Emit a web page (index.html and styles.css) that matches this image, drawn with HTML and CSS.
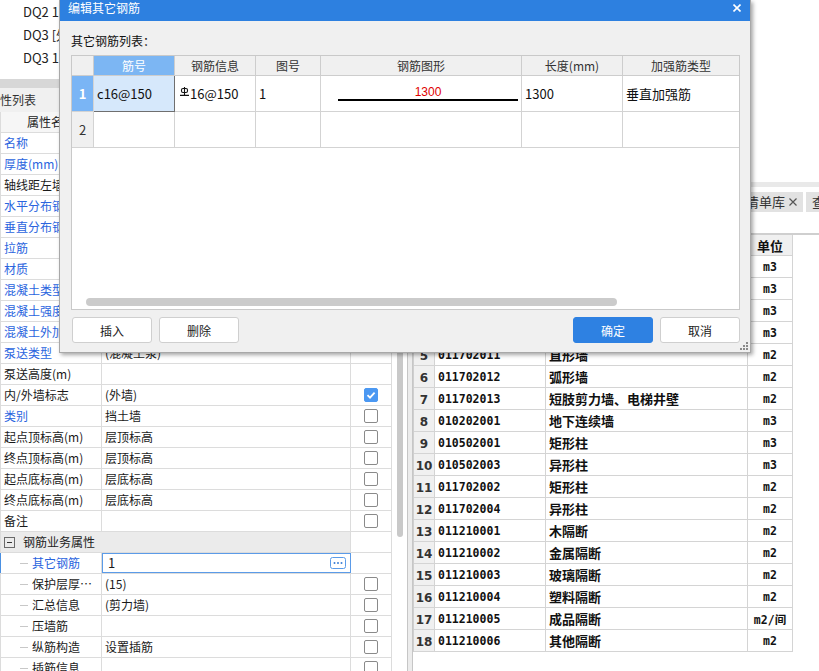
FILE: index.html
```html
<!DOCTYPE html>
<html lang="zh">
<head>
<meta charset="utf-8">
<title>编辑其它钢筋</title>
<link rel="stylesheet" href="styles.css">
</head>
<body>
<div class="app">
  <div class="left">
    <ul class="tree">
      <li>DQ2 1200</li>
      <li>DQ3 [外墙]</li>
      <li>DQ3 1200</li>
    </ul>
    <div class="split-h"></div>
    <div class="panel-title"><span>属性列表</span></div>
    <div class="prop-area">
      <div class="prop-table">
        <div class="prow head"><div>属性名称</div><div>属性值</div><div>附加</div></div>
        <div class="prow"><div class="blue"><span class="lbl">名称</span></div><div>DQ3</div><div class="c3"></div></div>
        <div class="prow"><div class="blue"><span class="lbl">厚度(mm)</span></div><div>250</div><div class="c3"><span class="cb"></span></div></div>
        <div class="prow"><div><span class="lbl">轴线距左墙皮距离(mm)</span></div><div>(125)</div><div class="c3"><span class="cb"></span></div></div>
        <div class="prow"><div class="blue"><span class="lbl">水平分布钢筋</span></div><div>(2)C12@200</div><div class="c3"><span class="cb"></span></div></div>
        <div class="prow"><div class="blue"><span class="lbl">垂直分布钢筋</span></div><div>(2)C14@200</div><div class="c3"><span class="cb"></span></div></div>
        <div class="prow"><div class="blue"><span class="lbl">拉筋</span></div><div>A6@600*600</div><div class="c3"><span class="cb"></span></div></div>
        <div class="prow"><div class="blue"><span class="lbl">材质</span></div><div>现浇混凝土</div><div class="c3"><span class="cb"></span></div></div>
        <div class="prow"><div class="blue"><span class="lbl">混凝土类型</span></div><div>(现浇碎石混凝土)</div><div class="c3"><span class="cb"></span></div></div>
        <div class="prow"><div class="blue"><span class="lbl">混凝土强度等级</span></div><div>(C30)</div><div class="c3"><span class="cb"></span></div></div>
        <div class="prow"><div class="blue"><span class="lbl">混凝土外加剂</span></div><div>(无)</div><div class="c3"><span class="cb"></span></div></div>
        <div class="prow"><div class="blue"><span class="lbl">泵送类型</span></div><div>(混凝土泵)</div><div class="c3"></div></div>
        <div class="prow"><div><span class="lbl">泵送高度(m)</span></div><div></div><div class="c3"></div></div>
        <div class="prow"><div><span class="lbl">内/外墙标志</span></div><div>(外墙)</div><div class="c3"><span class="cb on"><svg width="12" height="12" viewBox="0 0 12 12"><path d="M2.5 6.2 L5 8.6 L9.6 3.6" fill="none" stroke="#fff" stroke-width="1.8"/></svg></span></div></div>
        <div class="prow"><div class="blue"><span class="lbl">类别</span></div><div>挡土墙</div><div class="c3"><span class="cb"></span></div></div>
        <div class="prow"><div><span class="lbl">起点顶标高(m)</span></div><div>层顶标高</div><div class="c3"><span class="cb"></span></div></div>
        <div class="prow"><div><span class="lbl">终点顶标高(m)</span></div><div>层顶标高</div><div class="c3"><span class="cb"></span></div></div>
        <div class="prow"><div><span class="lbl">起点底标高(m)</span></div><div>层底标高</div><div class="c3"><span class="cb"></span></div></div>
        <div class="prow"><div><span class="lbl">终点底标高(m)</span></div><div>层底标高</div><div class="c3"><span class="cb"></span></div></div>
        <div class="prow"><div><span class="lbl">备注</span></div><div></div><div class="c3"><span class="cb"></span></div></div>
        <div class="prow group"><div class="cg"><span class="minus"></span>钢筋业务属性</div><div class="c3"></div></div>
        <div class="prow sub sel"><div class="blue"><span class="lbl">其它钢筋</span></div><div class="edit"><span class="ev">1</span><svg class="more" width="16" height="12" viewBox="0 0 16 12"><rect x="0.5" y="0.5" width="15" height="11" rx="2" fill="#fff" stroke="#5b9be8"/><circle cx="4.5" cy="6" r="1" fill="#3b7fd6"/><circle cx="8" cy="6" r="1" fill="#3b7fd6"/><circle cx="11.5" cy="6" r="1" fill="#3b7fd6"/></svg></div><div class="c3"></div></div>
        <div class="prow sub"><div><span class="lbl">保护层厚度(mm)</span></div><div>(15)</div><div class="c3"><span class="cb"></span></div></div>
        <div class="prow sub"><div><span class="lbl">汇总信息</span></div><div>(剪力墙)</div><div class="c3"><span class="cb"></span></div></div>
        <div class="prow sub"><div><span class="lbl">压墙筋</span></div><div></div><div class="c3"><span class="cb"></span></div></div>
        <div class="prow sub"><div><span class="lbl">纵筋构造</span></div><div>设置插筋</div><div class="c3"><span class="cb"></span></div></div>
        <div class="prow sub"><div><span class="lbl">插筋信息</span></div><div></div><div class="c3"><span class="cb"></span></div></div>
      </div>
      <div class="vscroll"><div class="vthumb"></div></div>
    </div>
  </div>
  <div class="split-v"></div>
  <div class="right">
    <div class="rp-top"></div>
    <div class="rp-band"></div>
    <div class="tabs">
      <div class="tab">工程量清单库<svg width="8" height="8" viewBox="0 0 8 8"><path d="M0.5 0.5 L7.5 7.5 M7.5 0.5 L0.5 7.5" stroke="#555" stroke-width="1.2"/></svg></div>
      <div class="tab cut">查询</div>
    </div>
    <div class="rp-gap"></div>
    <div class="rp-rule"></div>
    <div class="qt">
      <div class="qrow qhead"><div class="qn"></div><div class="qc">编码</div><div class="qm">名称</div><div class="qu">单位</div></div>
      <div class="qrow"><div class="qn">1</div><div class="qc">010504001</div><div class="qm">直形墙</div><div class="qu">m3</div></div>
      <div class="qrow"><div class="qn">2</div><div class="qc">010504002</div><div class="qm">弧形墙</div><div class="qu">m3</div></div>
      <div class="qrow"><div class="qn">3</div><div class="qc">010504003</div><div class="qm">短肢剪力墙</div><div class="qu">m3</div></div>
      <div class="qrow"><div class="qn">4</div><div class="qc">010504004</div><div class="qm">挡土墙</div><div class="qu">m3</div></div>
      <div class="qrow"><div class="qn">5</div><div class="qc">011702011</div><div class="qm">直形墙</div><div class="qu">m2</div></div>
      <div class="qrow"><div class="qn">6</div><div class="qc">011702012</div><div class="qm">弧形墙</div><div class="qu">m2</div></div>
      <div class="qrow"><div class="qn">7</div><div class="qc">011702013</div><div class="qm">短肢剪力墙、电梯井壁</div><div class="qu">m2</div></div>
      <div class="qrow"><div class="qn">8</div><div class="qc">010202001</div><div class="qm">地下连续墙</div><div class="qu">m3</div></div>
      <div class="qrow"><div class="qn">9</div><div class="qc">010502001</div><div class="qm">矩形柱</div><div class="qu">m3</div></div>
      <div class="qrow"><div class="qn">10</div><div class="qc">010502003</div><div class="qm">异形柱</div><div class="qu">m3</div></div>
      <div class="qrow"><div class="qn">11</div><div class="qc">011702002</div><div class="qm">矩形柱</div><div class="qu">m2</div></div>
      <div class="qrow"><div class="qn">12</div><div class="qc">011702004</div><div class="qm">异形柱</div><div class="qu">m2</div></div>
      <div class="qrow"><div class="qn">13</div><div class="qc">011210001</div><div class="qm">木隔断</div><div class="qu">m2</div></div>
      <div class="qrow"><div class="qn">14</div><div class="qc">011210002</div><div class="qm">金属隔断</div><div class="qu">m2</div></div>
      <div class="qrow"><div class="qn">15</div><div class="qc">011210003</div><div class="qm">玻璃隔断</div><div class="qu">m2</div></div>
      <div class="qrow"><div class="qn">16</div><div class="qc">011210004</div><div class="qm">塑料隔断</div><div class="qu">m2</div></div>
      <div class="qrow"><div class="qn">17</div><div class="qc">011210005</div><div class="qm">成品隔断</div><div class="qu">m2/间</div></div>
      <div class="qrow"><div class="qn">18</div><div class="qc">011210006</div><div class="qm">其他隔断</div><div class="qu">m2</div></div>
    </div>
  </div>
</div>

<div class="dialog">
  <div class="dlg-title">
    <span>编辑其它钢筋</span>
    <svg class="close" width="8" height="8" viewBox="0 0 8 8"><path d="M0.5 0.5 L7.5 7.5 M7.5 0.5 L0.5 7.5" stroke="#fff" stroke-width="1.6"/></svg>
  </div>
  <div class="dlg-body">
    <div class="dlg-label">其它钢筋列表：</div>
    <div class="rtable">
      <div class="rt-row rt-head">
        <div></div><div class="hsel">筋号</div><div>钢筋信息</div><div>图号</div><div>钢筋图形</div><div>长度(mm)</div><div>加强筋类型</div>
      </div>
      <div class="rt-row rt-body">
        <div class="rh rh-sel">1</div>
        <div class="csel">c16@150</div>
        <div><span class="rb"><svg class="hrb" width="9" height="9" viewBox="0 0 9 9"><rect x="1.5" y="1.5" width="6" height="4" rx="1.5" fill="none" stroke="#111" stroke-width="1.1"/><path d="M4.5 0 V8 M0 8.4 H9" stroke="#111" stroke-width="1.1"/></svg>16@150</span></div>
        <div>1</div>
        <div class="shape"><div class="shape-len">1300</div><div class="shape-bar"></div></div>
        <div>1300</div>
        <div>垂直加强筋</div>
      </div>
      <div class="rt-row rt-body">
        <div class="rh">2</div><div></div><div></div><div></div><div></div><div></div><div></div>
      </div>
      <div class="rt-fill"></div>
      <div class="hscroll"><div class="hthumb"></div></div>
    </div>
    <div class="dlg-btns">
      <button class="btn">插入</button>
      <button class="btn">删除</button>
      <div class="spacer"></div>
      <button class="btn primary">确定</button>
      <button class="btn">取消</button>
    </div>
  </div>
  <svg class="grip" width="8" height="8" viewBox="0 0 8 8"><rect x="6" y="0" width="2" height="2" fill="#8a8a8a"/><rect x="3" y="3" width="2" height="2" fill="#8a8a8a"/><rect x="6" y="3" width="2" height="2" fill="#8a8a8a"/><rect x="0" y="6" width="2" height="2" fill="#8a8a8a"/><rect x="3" y="6" width="2" height="2" fill="#8a8a8a"/><rect x="6" y="6" width="2" height="2" fill="#8a8a8a"/></svg>
</div>
</body>
</html>
```

FILE: styles.css
```css
* { box-sizing: border-box; margin: 0; padding: 0; }
html, body { width: 819px; height: 671px; overflow: hidden; background: #fff; }
body {
  position: relative;
  font-family: "Noto Sans CJK SC", "Noto Sans", sans-serif;
  font-size: 12px;
  color: #1a1a1a;
}
.app { display: flex; height: 671px; }

/* ---------- left panel ---------- */
.left { width: 407px; flex: none; display: flex; flex-direction: column; }
.tree { list-style: none; height: 79px; padding-left: 23px; font-size: 13px; color: #222; }
.tree li { height: 23px; line-height: 23px; white-space: nowrap; }
.split-h { height: 9px; background: #d7d7d7; }
.panel-title { height: 24px; background: #f0f0f0; overflow: hidden; line-height: 23px; font-size: 12px; color: #333; white-space: nowrap; }
.panel-title span { margin-left: -12px; }

.prop-area { display: flex; flex: 1; min-height: 0; }
.prop-table { width: 392px; flex: none; }
.prow {
  display: grid;
  grid-template-columns: 102px 249px 41px;
  height: 21px;
  border-bottom: 1px solid #dcdcdc;
}
.prow > div {
  border-right: 1px solid #dcdcdc;
  display: flex;
  align-items: center;
  padding-left: 3px;
  white-space: nowrap;
  overflow: hidden;
  line-height: 20px;
  min-width: 0;
}
.prow > div:first-child { border-left: 1px solid #dcdcdc; }
.lbl { overflow: hidden; text-overflow: ellipsis; white-space: nowrap; min-width: 0; }
.prow.head { background: #f6f6f6; }
.prow.head > div { justify-content: center; padding-left: 0; color: #222; }
.blue { color: #2a64de; }
.prow > .c3 { justify-content: center; padding-left: 0; }
.cb {
  width: 14px; height: 14px;
  border: 1px solid #8a8a8a;
  border-radius: 2px;
  background: #fff;
  display: flex; align-items: center; justify-content: center;
}
.cb.on { background: #4b98f2; border-color: #4b98f2; }

.prow.group { grid-template-columns: 351px 41px; }
.prow.group > .cg { background: #ebebeb; padding-left: 3px; color: #222; }
.minus {
  width: 11px; height: 11px;
  border: 1px solid #6a6a6a;
  margin-right: 8px;
  flex: none;
  display: flex; align-items: center; justify-content: center;
}
.minus::after { content: ""; width: 5px; height: 1px; background: #333; }

.prow.sub > div:first-child { padding-left: 19px; padding-right: 2px; }
.prow.sub > div:first-child::before {
  content: ""; flex: none;
  width: 8px; height: 1px; background: #c8c8c8; margin-right: 4px;
}
.prow.sel > div:first-child { border-left: 1px solid #4a90e2; }
.prow > .edit {
  outline: 1px solid #5b9be8;
  outline-offset: -1px;
  justify-content: space-between;
  padding-left: 6px;
  padding-right: 4px;
  font-size: 13px;
}
.more { flex: none; }

.vscroll { width: 15px; flex: none; padding-left: 5px; padding-top: 4px; }
.vthumb { width: 6px; height: 421px; border-radius: 3px; background: #c9c9c9; }

.split-v { width: 6px; flex: none; background: #ececec; border-left: 1px solid #c6c6c6; border-right: 1px solid #c6c6c6; }

/* ---------- right panel ---------- */
.right { flex: 1; display: flex; flex-direction: column; min-width: 0; overflow: hidden; }
.rp-top { height: 182px; }
.rp-band { height: 5px; background: #e9e9e9; }
.tabs { height: 25px; padding-top: 5px; display: flex; justify-content: flex-end; gap: 3px; }
.tab {
  height: 20px;
  background: #e2e2e2;
  padding: 0 6px 0 8px;
  display: flex; align-items: center; gap: 4px;
  font-size: 13px; color: #333; line-height: 20px;
  white-space: nowrap;
  flex: none;
}
.tab.cut { width: 13px; padding: 0 0 0 6px; overflow: hidden; }
.rp-gap { height: 21px; }
.rp-rule { height: 2px; background: #cfcfcf; }

.qt { width: 380px; border-left: 1px solid #cfcfcf; font-weight: bold; color: #111; }
.qrow {
  display: grid;
  grid-template-columns: 21px 111px 202px 45px;
  height: 22px;
  border-bottom: 1px solid #d4d4d4;
}
.qrow > div { border-right: 1px solid #d4d4d4; display: flex; align-items: center; white-space: nowrap; overflow: hidden; }
.qrow.qhead { height: 21px; background: #f0f0f0; }
.qn { background: #f0f0f0; justify-content: center; font-family: "DejaVu Sans", sans-serif; font-size: 12px; color: #333; padding-top: 2px; }
.qc { padding-left: 3px; font-family: "DejaVu Sans Mono", monospace; font-size: 11.5px; }
.qm { padding-left: 3px; font-size: 13px; }
.qu { justify-content: center; font-family: "DejaVu Sans Mono", "Noto Sans CJK SC", monospace; font-size: 11.5px; }
.qhead .qc, .qhead .qm, .qhead .qu { font-family: "Noto Sans CJK SC", sans-serif; font-size: 13px; justify-content: center; padding-left: 0; }

/* ---------- dialog ---------- */
.dialog {
  position: absolute;
  left: 59px; top: 0;
  width: 692px; height: 353px;
  background: #f0f0f0;
  border: 1px solid #a8a8a8;
  border-top: 0;
  box-shadow: 2px 2px 4px rgba(0, 0, 0, 0.35);
  display: flex; flex-direction: column;
}
.dlg-title {
  height: 21px; flex: none;
  background: #2d80e0;
  color: #fff;
  font-size: 12px; line-height: 15px;
  padding: 0 9px 0 8px;
  display: flex; justify-content: space-between; align-items: flex-start;
}
.close { margin-top: 4px; }
.dlg-body { flex: 1; padding: 0 10px 0 11px; display: flex; flex-direction: column; }
.dlg-label { height: 34px; padding-top: 12px; line-height: 16px; font-size: 12px; color: #111; }

.rtable {
  height: 255px; flex: none;
  border: 1px solid #c9c9c9;
  background: #fff;
  display: flex; flex-direction: column;
}
.rt-row { display: grid; grid-template-columns: 22px 81px 81px 65px 201px 101px 1fr; }
.rt-row > div { border-right: 1px solid #d3d3d3; border-bottom: 1px solid #d3d3d3; }
.rt-row > div:last-child { border-right: 0; }
.rt-head { height: 20px; background: #f0f0f0; }
.rt-head > div { display: flex; align-items: center; justify-content: center; color: #333; line-height: 19px; border-color: #cdcdcd; }
.rt-head > .hsel { background: #7cb6f3; color: #fff; }
.rt-body { height: 36px; }
.rt-body > div { display: flex; align-items: center; padding-left: 3px; font-size: 13px; color: #111; white-space: nowrap; }
.rt-body > .rh { background: #f0f0f0; justify-content: center; padding-left: 0; color: #333; }
.rt-body > .rh-sel { background: #7ab5f5; color: #fff; font-weight: bold; }
.rt-body > .csel { background: #d6e8fb; border-right-color: #6f6f6f; border-bottom-color: #6f6f6f; }
.rb { display: inline-block; }
.hrb { vertical-align: 3px; margin-left: 2px; margin-right: 1px; }
.rt-body > .shape { flex-direction: column; align-items: stretch; padding: 9px 3px 0 17px; }
.shape-len { height: 14px; line-height: 14px; text-align: center; color: #e00000; font-family: "Liberation Sans", sans-serif; font-size: 12px; }
.shape-bar { height: 2px; background: #000; }
.rt-fill { flex: 1; }
.hscroll { height: 11px; padding: 0 0 3px 14px; flex: none; }
.hthumb { width: 531px; height: 8px; border-radius: 4px; background: #cbcbcb; }

.dlg-btns { display: flex; gap: 7px; margin-top: 7px; height: 26px; padding-left: 1px; }
.btn {
  width: 80px; height: 26px;
  border: 1px solid #cfcfcf;
  border-radius: 3px;
  background: #fff;
  font-family: "Noto Sans CJK SC", sans-serif;
  font-size: 12px;
  color: #222;
  display: flex; align-items: center; justify-content: center;
}
.btn.primary { background: #2e81e2; border-color: #2e81e2; color: #fff; }
.spacer { flex: 1; }
.grip { position: absolute; right: 2px; bottom: 2px; }
```
